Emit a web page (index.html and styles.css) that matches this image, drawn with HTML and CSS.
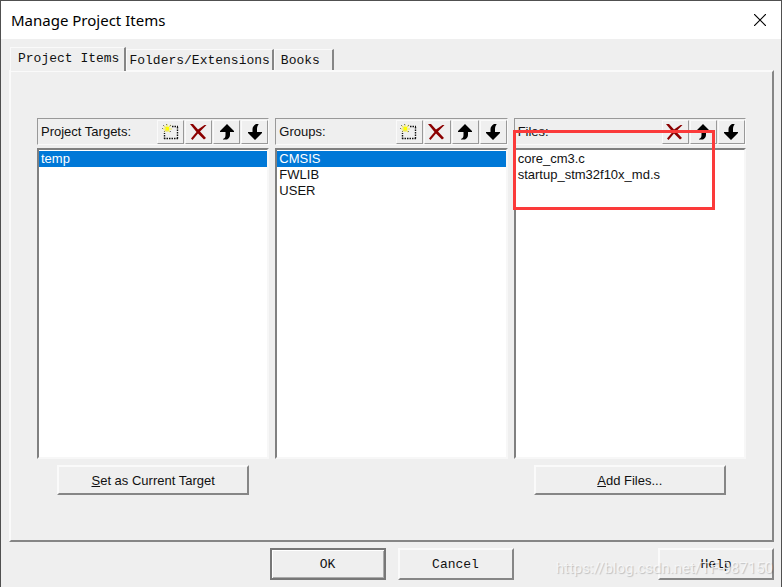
FILE: index.html
```html
<!DOCTYPE html>
<html lang="en">

<head>
    <meta charset="UTF-8">
    <meta name="viewport" content="width=device-width, initial-scale=1.0">
    <title>Manage Project Items</title>
    <link rel="stylesheet" href="styles.css">
</head>

<body>
    <!-- Shared toolbar icons -->
    <svg class="icon-defs" aria-hidden="true">
        <symbol id="icon-new" viewBox="0 0 18 16">
            <path d="M10 2.500h6M15.500 3v12M16 14.500H2M2.500 15V9" fill="none" stroke="#111" stroke-width="1.4" stroke-dasharray="1.5 1"/>
            <path d="M2 2l6 6M9 1L2 8M5 0v8M1 5h9" stroke="#f0e850" stroke-width="1.2"/>
            <path d="M1 1h1v1H1zM4 0h1v1H4zM8 1h1v1H8zM0 4h1v1H0zM2 7h1v1H2zM8 7h1v1H8z" fill="#777"/>
            <path d="M4 3h3v3H4z" fill="#ff0"/>
        </symbol>
        <symbol id="icon-delete" viewBox="0 0 18 16">
            <path d="M0 0l3 0 5 5.500L14.500 1l2 0L10 7.500l6 6.500-2 1.500-6-6L2.500 16 1 14.500 6.500 8z" fill="#8b0000"/>
        </symbol>
        <symbol id="icon-up" viewBox="0 0 18 16">
            <path d="M9 0l7 7v1h-4v3c0 2-1.500 3.500-3 4.500H5V15c2-1 2.500-2 2.500-4V8H2V7z" fill="#000"/>
        </symbol>
        <symbol id="icon-down" viewBox="0 0 18 16">
            <path d="M9 16l7-7V8h-5V5c0-2 .5-3 1.500-4.500V0H10C8 1 6.500 3 6.500 5v3H2v1z" fill="#000"/>
        </symbol>
    </svg>

    <div class="dialog">
        <div class="title-bar">
            <h1>Manage Project Items</h1>
            <button class="close" aria-label="Close">
                <svg width="12" height="12" viewBox="0 0 12 12"><path d="M0 0l12 12M12 0L0 12" stroke="#000" stroke-width="1.2"/></svg>
            </button>
        </div>

        <div class="content">
            <div class="tabs" role="tablist">
                <button class="tab active" role="tab" aria-selected="true">Project Items</button>
                <button class="tab" role="tab" aria-selected="false">Folders/Extensions</button>
                <button class="tab books" role="tab" aria-selected="false">Books</button>
            </div>

            <div class="panel" role="tabpanel">
                <!-- Project Targets -->
                <div class="column">
                    <div class="column-header">
                        <label for="targets">Project Targets:</label>
                        <div class="tools">
                            <button aria-label="New"><svg class="icon"><use href="#icon-new"/></svg></button>
                            <button aria-label="Delete"><svg class="icon"><use href="#icon-delete"/></svg></button>
                            <button aria-label="Move up"><svg class="icon"><use href="#icon-up"/></svg></button>
                            <button aria-label="Move down"><svg class="icon"><use href="#icon-down"/></svg></button>
                        </div>
                    </div>
                    <select id="targets" class="list" size="8">
                        <option selected>temp</option>
                    </select>
                    <button class="btn wide"><u>S</u>et as Current Target</button>
                </div>

                <!-- Groups -->
                <div class="column">
                    <div class="column-header">
                        <label for="groups">Groups:</label>
                        <div class="tools">
                            <button aria-label="New"><svg class="icon"><use href="#icon-new"/></svg></button>
                            <button aria-label="Delete"><svg class="icon"><use href="#icon-delete"/></svg></button>
                            <button aria-label="Move up"><svg class="icon"><use href="#icon-up"/></svg></button>
                            <button aria-label="Move down"><svg class="icon"><use href="#icon-down"/></svg></button>
                        </div>
                    </div>
                    <select id="groups" class="list" size="8">
                        <option selected>CMSIS</option>
                        <option>FWLIB</option>
                        <option>USER</option>
                    </select>
                </div>

                <!-- Files -->
                <div class="column">
                    <div class="column-header">
                        <label for="files">Files:</label>
                        <div class="tools">
                            <button aria-label="Delete"><svg class="icon"><use href="#icon-delete"/></svg></button>
                            <button aria-label="Move up"><svg class="icon"><use href="#icon-up"/></svg></button>
                            <button aria-label="Move down"><svg class="icon"><use href="#icon-down"/></svg></button>
                        </div>
                    </div>
                    <select id="files" class="list" size="8">
                        <option>core_cm3.c</option>
                        <option>startup_stm32f10x_md.s</option>
                    </select>
                    <button class="btn wide"><u>A</u>dd Files...</button>
                    <div class="marker"></div>
                </div>
            </div>

            <div class="footer">
                <div class="footer-main">
                    <button class="btn default">OK</button>
                    <button class="btn">Cancel</button>
                </div>
                <button class="btn help">Help</button>
                <span class="watermark">https://blog.csdn.net/TF-987150</span>
            </div>
        </div>
    </div>
</body>

</html>
```

FILE: styles.css
```css
* {
    box-sizing: border-box;
}

body {
    margin: 0;
    background: #efefef;
    font-family: "Liberation Sans", Arial, sans-serif;
    font-size: 13px;
    color: #111;
}

button {
    font: inherit;
    color: inherit;
    padding: 0;
    margin: 0;
}

.icon-defs {
    display: none;
}

.dialog {
    min-height: 100vh;
    border: 1px solid #505050;
    border-bottom: 0;
}

.title-bar {
    display: flex;
    align-items: center;
    justify-content: space-between;
    height: 38px;
    padding: 0 11px 0 10px;
    background: #fff;
}

h1 {
    margin: 0;
    font-family: "Noto Sans", sans-serif;
    font-size: 15px;
    font-weight: normal;
    color: #000;
}

.close {
    display: flex;
    align-items: center;
    justify-content: center;
    width: 20px;
    height: 20px;
    border: 0;
    background: none;
}

.content {
    padding: 8px 7px 6px 8px;
}

/* Tabs */
.tabs {
    display: flex;
    align-items: flex-end;
    padding-left: 1px;
    font-family: "Liberation Mono", monospace;
    font-size: 13px;
}

.tab {
    height: 21px;
    padding: 0 2px;
    border: 1px solid #fafafa;
    border-right: 2px solid #868686;
    border-bottom: 0;
    background: #efefef;
}

.tab.active {
    position: relative;
    height: 24px;
    margin-bottom: -1px;
    padding: 0 5px 2px 7px;
}

.tab.books {
    padding: 0 12px 0 6px;
}

.panel {
    display: grid;
    grid-template-columns: 1fr 1fr 1fr;
    gap: 6px;
    padding: 46px 26px 45px;
    border: 2px solid;
    border-color: #fafafa #868686 #868686 #fafafa;
}

.column {
    position: relative;
    display: flex;
    flex-direction: column;
}

.column-header {
    display: flex;
    align-items: center;
    justify-content: space-between;
    height: 27px;
    padding-left: 3px;
    border: 1px solid;
    border-color: #999 #fafafa #fafafa #999;
}

.tools {
    display: flex;
    gap: 1px;
}

.tools button {
    display: flex;
    align-items: center;
    justify-content: center;
    width: 27px;
    height: 24px;
    border: 1px solid;
    border-color: #fafafa #999 #999 #fafafa;
    background: #efefef;
}

.icon {
    width: 18px;
    height: 16px;
}

.list {
    appearance: none;
    height: 311px;
    margin: 3px 0 6px;
    padding: 1px 0 0;
    border: 2px solid;
    border-color: #808080 #f7f7f7 #f7f7f7 #808080;
    border-radius: 0;
    outline: 0;
    background: #fff;
    font: inherit;
    color: #111;
    overflow: hidden;
}

.list option {
    min-height: 16px;
    padding: 0 2px;
    line-height: 16px;
}

.list option:checked {
    background: #0078d7 linear-gradient(#0078d7, #0078d7);
    color: #fff;
}

/* Buttons */
.btn {
    width: 116px;
    height: 32px;
    border: 2px solid;
    border-color: #fafafa #868686 #868686 #fafafa;
    background: #efefef;
}

.btn.wide {
    align-self: center;
    width: 192px;
    height: 30px;
}

.btn.default {
    border-color: #777;
    box-shadow: inset 1px 1px #fff, inset -1px -1px #aaa;
}

.footer {
    position: relative;
    display: flex;
    justify-content: center;
    margin-top: 6px;
    font-family: "Liberation Mono", monospace;
    font-size: 13px;
}

.footer-main {
    display: flex;
    gap: 12px;
}

.help {
    position: absolute;
    right: 0;
}

.marker {
    position: absolute;
    top: 12px;
    left: -1px;
    width: 202px;
    height: 80px;
    border: 3px solid #fb3a3a;
    pointer-events: none;
}

.watermark {
    position: absolute;
    right: 1px;
    bottom: 0;
    font-family: Roboto, "Liberation Sans", Arial, sans-serif;
    font-size: 15px;
    line-height: 24px;
    color: rgba(250, 250, 250, 0.8);
    text-shadow: 1px 1px 1px rgba(0, 0, 0, 0.2);
    pointer-events: none;
}
```
